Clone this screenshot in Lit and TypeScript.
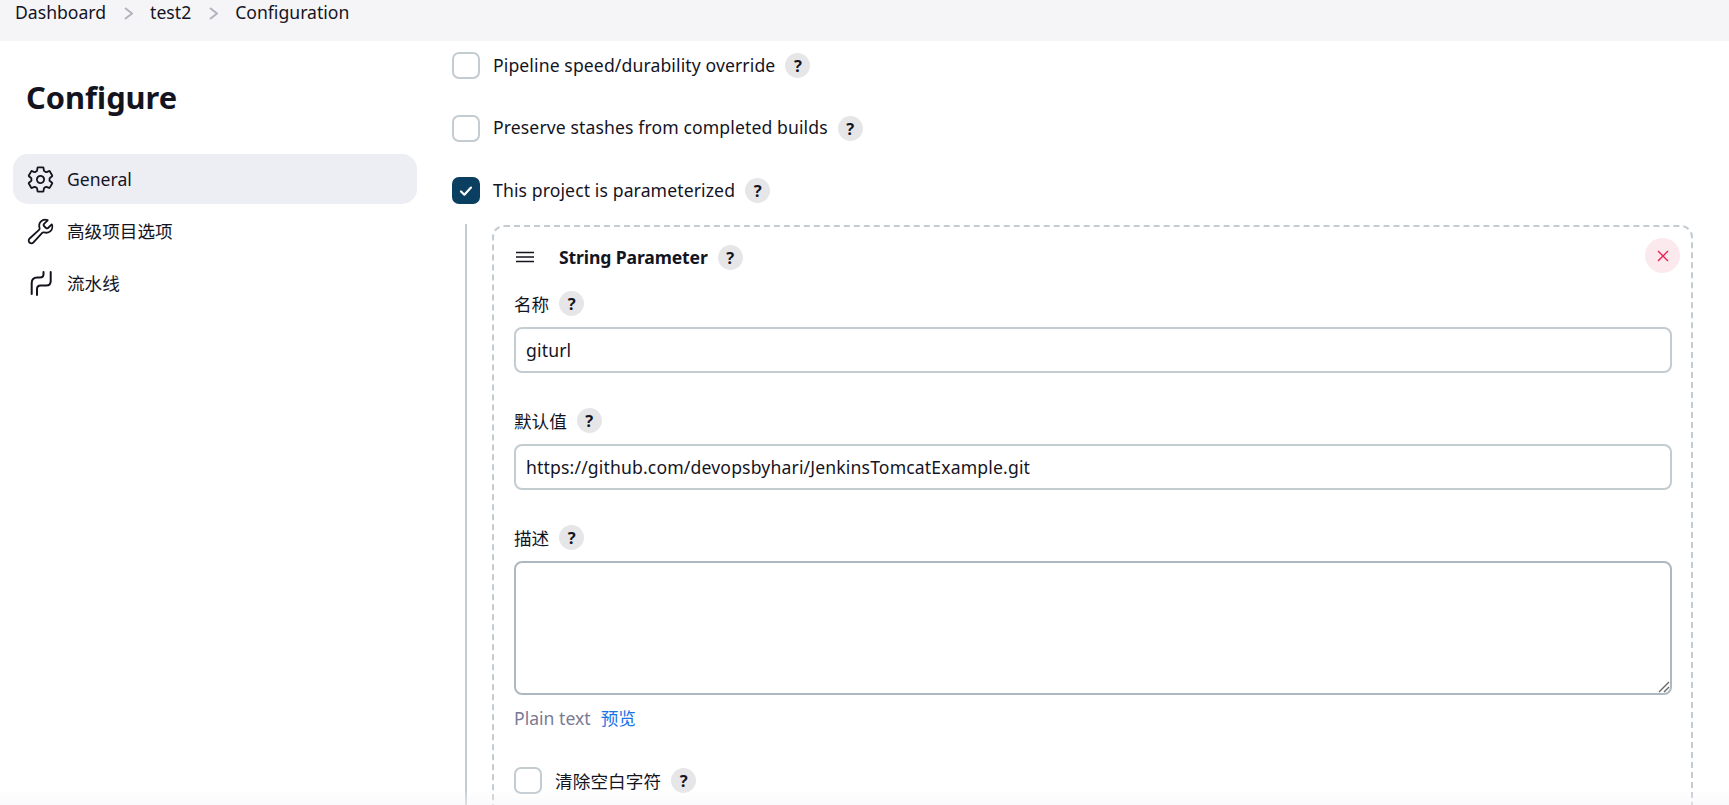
import { LitElement, html, css, svg } from "lit";
import { customElement } from "lit/decorators.js";

const help = html`<span class="help">?</span>`;

const gear = svg`<path d="M262.29 192.31a64 64 0 1057.4 57.4 64.13 64.13 0 00-57.4-57.4zM416.39 256a154.34 154.34 0 01-1.53 20.79l45.21 35.46a10.81 10.81 0 012.45 13.75l-42.77 74a10.81 10.81 0 01-13.14 4.59l-44.9-18.08a16.11 16.11 0 00-15.17 1.75A164.48 164.48 0 01325 400.8a15.94 15.94 0 00-8.82 12.14l-6.73 47.89a11.08 11.08 0 01-10.68 9.17h-85.54a11.11 11.11 0 01-10.69-8.87l-6.72-47.82a16.07 16.07 0 00-9-12.22 155.3 155.3 0 01-21.46-12.57 16 16 0 00-15.11-1.71l-44.89 18.07a10.81 10.81 0 01-13.14-4.58l-42.77-74a10.8 10.8 0 012.45-13.75l38.21-30a16.05 16.05 0 006-14.08c-.36-4.17-.58-8.33-.58-12.5s.21-8.27.58-12.35a16 16 0 00-6.07-13.94l-38.19-30A10.81 10.81 0 0149.48 186l42.77-74a10.81 10.81 0 0113.14-4.59l44.9 18.08a16.11 16.11 0 0015.17-1.75A164.48 164.48 0 01187 111.2a15.94 15.94 0 008.82-12.14l6.73-47.89A11.08 11.08 0 01213.23 42h85.54a11.11 11.11 0 0110.69 8.87l6.72 47.82a16.07 16.07 0 009 12.22 155.3 155.3 0 0121.46 12.57 16 16 0 0015.11 1.71l44.89-18.07a10.81 10.81 0 0113.14 4.58l42.77 74a10.8 10.8 0 01-2.45 13.75l-38.21 30a16.05 16.05 0 00-6.05 14.08c.33 4.14.55 8.3.55 12.47z"/>`;
const wrench = svg`<path d="M393.87 190a32.1 32.1 0 01-45.25 0l-26.57-26.57a32.09 32.09 0 010-45.26L382.19 58a1 1 0 00-.3-1.64c-38.82-16.64-89.15-8.16-121.11 23.57-30.59 30.35-32.32 76-21.12 115.84a31.93 31.93 0 01-9.06 32.08L64 380a48.17 48.17 0 1068 68l153.86-167a31.93 31.93 0 0131.6-9.13c39.54 10.59 84.54 8.6 114.72-21.19 32.49-32 39.5-88.56 23.75-120.93a1 1 0 00-1.6-.26z"/>`;
const pipe = svg`<path class="px" d="M5.7 25V14q0-5.5 5.5-5.5H14q3.5 0 3.5-3.5V3"/><path class="px" d="M24.7 3v9q0 4.5-4.5 4.5H14.500q-3.500 0-3.500 3.500V26"/>`;

@customElement("app-root")
export class AppRoot extends LitElement {
  static styles = css`
    :host {
      display: block;
      height: 805px;
      overflow: hidden;
      position: relative;
      background: #fff;
      color: #14141f;
      font-family: "Noto Sans", "Noto Sans CJK SC", sans-serif;
      font-size: 17.6px;
    }
    .crumbs {
      height: 41px;
      box-sizing: border-box;
      background: #f5f5f8;
      display: flex;
      align-items: flex-start;
      padding-left: 15px;
      line-height: 24px;
    }
    .crumbs .chev {
      width: 44px;
      display: flex;
      justify-content: center;
      padding-top: 7px;
    }
    .crumbs svg { width: 9px; height: 13px; fill: none; stroke: #b3b3bf; stroke-width: 2; }
    .page { display: flex; }
    .side { width: 417px; box-sizing: border-box; padding: 0 0 0 13px; flex: none; }
    h1 {
      margin: 0;
      padding: 35px 0 0 13px;
      height: 113px;
      box-sizing: border-box;
      font-size: 30.8px;
      line-height: 42px;
      font-weight: 700;
    }
    .nav { display: flex; flex-direction: column; gap: 2px; }
    .item {
      height: 50px;
      border-radius: 15px;
      display: flex;
      align-items: center;
      padding-left: 13px;
      gap: 12px;
      font-size: 17.6px;
    }
    .item.on { background: #eceef4; }
    .item svg { width: 29px; height: 29px; fill: none; stroke: #14141f; stroke-width: 32; stroke-linecap: round; stroke-linejoin: round; flex: none; }
    .item svg .px { stroke-width: 2; }
    .item .cjk { padding-bottom: 2px; }
    .main { flex: 1; padding: 11px 36px 0 35px; min-width: 0; }
    .check {
      display: flex;
      align-items: center;
      height: 27px;
      margin-bottom: 35.5px;
      letter-spacing: 0.11px;
    }
    .check .txt { padding-bottom: 2px; }
    .box {
      width: 28px;
      height: 27px;
      box-sizing: border-box;
      border: 2px solid #c3ccd1;
      border-radius: 7px;
      background: #fff;
      flex: none;
      margin-right: 13px;
      display: flex;
      align-items: center;
      justify-content: center;
    }
    .box.on { background: #0b3f61; border-color: #0b3f61; }
    .box svg { width: 16px; height: 16px; fill: none; stroke: #fff; stroke-width: 2.2; stroke-linecap: round; stroke-linejoin: round; }
    .help {
      width: 25px;
      height: 25px;
      border-radius: 50%;
      background: #e6e6e8;
      color: #14141f;
      font-size: 16.5px;
      font-weight: 700;
      line-height: 25px;
      text-align: center;
      margin-left: 10px;
      letter-spacing: 0;
      flex: none;
    }
    .nest {
      border-left: 2px solid #c3ccd1;
      margin: -15.5px 0 0 13px;
      padding: 1px 0 0 25px;
    }
    .repeat {
      position: relative;
      border: 2px dashed #c3ccd1;
      border-radius: 12px;
      padding: 0 19px 40px 20px;
    }
    .rhead { display: flex; align-items: center; height: 60px; margin-bottom: 4px; font-weight: 700; font-size: 17.6px; letter-spacing: -0.13px; }
    .rhead .txt { padding-bottom: 1px; }
    .rhead svg { width: 20px; height: 14px; margin: 0 24px 0 1px; stroke: #14141f; stroke-width: 1.6; fill: none; }
    .close {
      position: absolute;
      right: 11px;
      top: 11px;
      width: 35px;
      height: 35px;
      border-radius: 50%;
      background: #fbe9ee;
      display: flex;
      align-items: center;
      justify-content: center;
    }
    .close svg { width: 12px; height: 12px; stroke: #e6204f; stroke-width: 1.4; fill: none; }
    .label { display: flex; align-items: center; height: 25px; }
    .field { margin-bottom: 35px; }
    .input {
      display: block;
      box-sizing: border-box;
      width: 100%;
      height: 46px;
      margin-top: 11px;
      border: 2px solid #c3ccd1;
      border-radius: 8px;
      padding: 0 10px;
      line-height: 42px;
      font-size: 17.6px;
      letter-spacing: 0.15px;
    }
    .area {
      position: relative;
      box-sizing: border-box;
      height: 134px;
      margin-top: 11px;
      border: 2px solid #adb9c0;
      border-radius: 8px;
    }
    .grip { position: absolute; right: 0; bottom: 0; width: 12px; height: 12px; stroke: #666; stroke-width: 1.4; fill: none; }
    .hint { display: flex; gap: 10px; height: 24px; line-height: 24px; margin-top: 11px; color: #7a7a94; }
    .hint a { color: #1a73e8; }
    .trim { margin-top: 37px; }
    .fade {
      position: absolute;
      left: 0;
      right: 0;
      bottom: 0;
      height: 15px;
      background: linear-gradient(rgba(245,245,248,0), rgba(245,245,248,0.55));
      pointer-events: none;
    }
  `;

  private chev() {
    return html`<span class="chev"><svg viewBox="0 0 9 13"><path d="M1 1l7 5.500-7 5.500"/></svg></span>`;
  }

  private row(label: string, on = false) {
    return html`<div class="check">
      <span class="box ${on ? "on" : ""}">${on ? html`<svg viewBox="0 0 16 16"><path d="M3 8.500l3.400 3.200L13 4.600"/></svg>` : ""}</span>
      <span class="txt">${label}</span>${help}
    </div>`;
  }

  render() {
    return html`
      <div class="crumbs">
        <span>Dashboard</span>${this.chev()}<span>test2</span>${this.chev()}<span>Configuration</span>
      </div>
      <div class="page">
        <aside class="side">
          <h1>Configure</h1>
          <nav class="nav">
            <div class="item on"><svg viewBox="0 0 512 512">${gear}</svg><span>General</span></div>
            <div class="item"><svg viewBox="0 0 512 512">${wrench}</svg><span class="cjk">高级项目选项</span></div>
            <div class="item"><svg viewBox="0 0 29 29">${pipe}</svg><span class="cjk">流水线</span></div>
          </nav>
        </aside>
        <main class="main">
          ${this.row("Pipeline speed/durability override")}
          ${this.row("Preserve stashes from completed builds")}
          ${this.row("This project is parameterized", true)}
          <div class="nest">
            <div class="repeat">
              <div class="rhead">
                <svg viewBox="0 0 20 14"><path d="M1 2.500h18M1 7h18M1 11.500h18"/></svg>
                <span class="txt">String Parameter</span>${help}
              </div>
              <span class="close"><svg viewBox="0 0 12 12"><path d="M1 1l10 10M11 1L1 11"/></svg></span>
              <div class="field">
                <div class="label"><span>名称</span>${help}</div>
                <div class="input">giturl</div>
              </div>
              <div class="field">
                <div class="label"><span>默认值</span>${help}</div>
                <div class="input">https://github.com/devopsbyhari/JenkinsTomcatExample.git</div>
              </div>
              <div>
                <div class="label"><span>描述</span>${help}</div>
                <div class="area"><svg class="grip" viewBox="0 0 12 12"><path d="M1 11L11 1M6 11l5-5"/></svg></div>
                <div class="hint"><span>Plain text</span><a>预览</a></div>
              </div>
              <div class="check trim">
                <span class="box"></span><span>清除空白字符</span>${help}
              </div>
            </div>
          </div>
        </main>
      </div>
      <div class="fade"></div>
    `;
  }
}
